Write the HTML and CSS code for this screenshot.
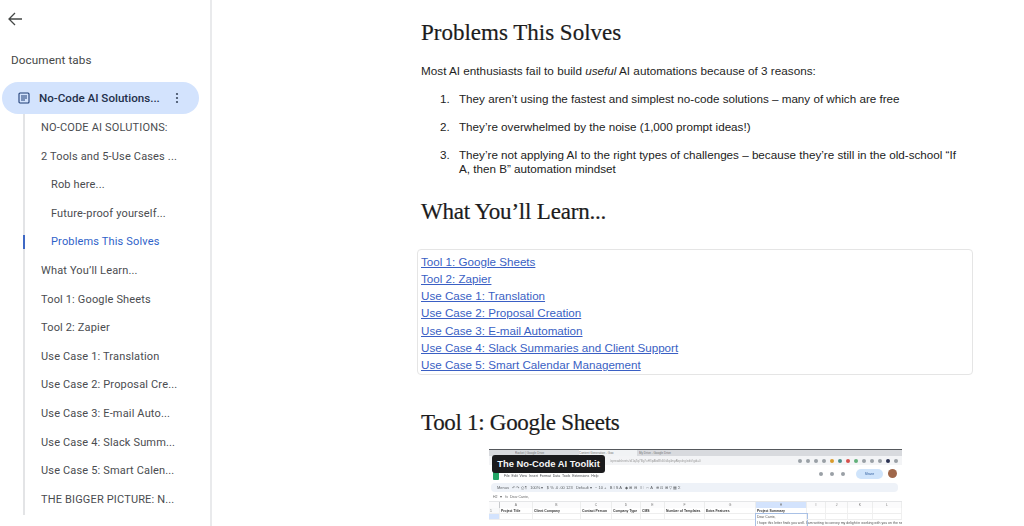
FILE: index.html
```html
<!DOCTYPE html>
<html lang="en">
<head>
<meta charset="utf-8">
<title>No-Code AI Solutions</title>
<link rel="stylesheet" href="styles.css">
</head>
<body>
<div class="app">
  <aside class="sidebar">
    <svg class="back" width="16" height="16" viewBox="0 0 16 16" fill="none" stroke="#444746" stroke-width="1.3"><path d="M15 8H2M8 2 2 8l6 6"/></svg>
    <div class="tabs-title">Document tabs</div>
    <div class="tab">
      <svg class="tab-icon" width="12" height="12" viewBox="0 0 12 12" fill="none" stroke="#1f3f77" stroke-width="1.1"><rect x="1" y="1" width="10" height="10" rx="1"/><path d="M3 4h6M3 6h6M3 8h4"/></svg>
      <span class="tab-name">No-Code AI Solutions...</span>
      <svg class="tab-more" width="4" height="12" viewBox="0 0 4 12" fill="#3c4a60"><circle cx="2" cy="2" r="1.1"/><circle cx="2" cy="6" r="1.1"/><circle cx="2" cy="10" r="1.1"/></svg>
    </div>
    <nav class="outline">
      <a class="item">NO-CODE AI SOLUTIONS:</a>
      <a class="item">2 Tools and 5-Use Cases ...</a>
      <a class="item sub">Rob here...</a>
      <a class="item sub">Future-proof yourself...</a>
      <a class="item sub current">Problems This Solves</a>
      <a class="item">What You’ll Learn...</a>
      <a class="item">Tool 1: Google Sheets</a>
      <a class="item">Tool 2: Zapier</a>
      <a class="item">Use Case 1: Translation</a>
      <a class="item">Use Case 2: Proposal Cre...</a>
      <a class="item">Use Case 3: E-mail Auto...</a>
      <a class="item">Use Case 4: Slack Summ...</a>
      <a class="item">Use Case 5: Smart Calen...</a>
      <a class="item">THE BIGGER PICTURE: N...</a>
    </nav>
  </aside>
  <main class="doc">
    <h2 class="h-first">Problems This Solves</h2>
    <p class="lead">Most AI enthusiasts fail to build <em>useful</em> AI automations because of 3 reasons:</p>
    <ol class="reasons">
      <li>They aren’t using the fastest and simplest no-code solutions – many of which are free</li>
      <li>They’re overwhelmed by the noise (1,000 prompt ideas!)</li>
      <li>They’re not applying AI to the right types of challenges – because they’re still in the old-school “If A, then B” automation mindset</li>
    </ol>
    <h2 class="h-learn">What You’ll Learn...</h2>
    <div class="toc">
      <a href="#">Tool 1: Google Sheets</a>
      <a href="#">Tool 2: Zapier</a>
      <a href="#">Use Case 1: Translation</a>
      <a href="#">Use Case 2: Proposal Creation</a>
      <a href="#">Use Case 3: E-mail Automation</a>
      <a href="#">Use Case 4: Slack Summaries and Client Support</a>
      <a href="#">Use Case 5: Smart Calendar Management</a>
    </div>
    <h2 class="h-tool">Tool 1: Google Sheets</h2>
    <figure class="shot">
      <div class="shot-blur">
        <div class="browser-tabs">
          <span class="btab">Rocket | Google Drive</span>
          <span class="btab active">Content Generation - Goo</span>
          <span class="btab">My Drive - Google Drive</span>
        </div>
        <div class="url-row">
          <span class="url">/spreadsheets/d/1qZq7Bg7uH7qAbd8k6Gt4q4myAbpuhg/edit#gid=0</span>
          <span class="ext-icons">
            <i class="dot grey"></i><i class="dot grey"></i><i class="dot grey"></i><i class="dot grey"></i><i class="dot orange"></i><i class="dot teal"></i><i class="dot red"></i><i class="dot green"></i><i class="dot grey"></i><i class="dot grey"></i><i class="dot grey"></i><i class="dot navy"></i><i class="dot grey"></i>
          </span>
        </div>
        <div class="title-row">
          <span class="sheets-logo"></span>
          <div class="title-text">
            <span class="doc-name">Content Generation Tool</span>
            <span class="menus">File&nbsp; Edit&nbsp; View&nbsp; Insert&nbsp; Format&nbsp; Data&nbsp; Tools&nbsp; Extensions&nbsp; Help</span>
          </div>
          <span class="title-actions">
            <i class="dot grey"></i><i class="dot grey"></i><i class="dot grey"></i>
            <span class="share">Share</span>
            <i class="avatar"></i>
          </span>
        </div>
        <div class="toolbar">Menus&nbsp;&nbsp; ↶ ↷ ⎙ ¶&nbsp;&nbsp; 100% ▾&nbsp;&nbsp; $ % .0 .00 123&nbsp;&nbsp; Default ▾&nbsp;&nbsp; − 10 +&nbsp;&nbsp; B I S A&nbsp;&nbsp; ◆ ⊞ ⊟&nbsp;&nbsp; ≡ ⫶ ⇔ A&nbsp;&nbsp; ⊕ ⊡ ⊞ ▽ ▦ Σ</div>
        <div class="formula">H2 &nbsp;&nbsp;▾ &nbsp;&nbsp;fx &nbsp;Dear Carrie,</div>
        <div class="sheet">
          <span class="col num"></span><span class="col">A</span><span class="col">B</span><span class="col">C</span><span class="col">D</span><span class="col">E</span><span class="col">F</span><span class="col">G</span><span class="col sel">H</span><span class="col">I</span><span class="col">J</span><span class="col">K</span><span class="col">L</span>
          <span class="cell num">1</span><b class="cell">Project Title</b><b class="cell">Client Company</b><b class="cell">Contact Person</b><b class="cell">Company Type</b><b class="cell">CMS</b><b class="cell">Number of Templates</b><b class="cell">Extra Features</b><b class="cell">Project Summary</b><span class="cell"></span><span class="cell"></span><span class="cell"></span><span class="cell"></span>
          <span class="cell num sel"></span><span class="cell"></span><span class="cell"></span><span class="cell"></span><span class="cell"></span><span class="cell"></span><span class="cell"></span><span class="cell"></span><span class="cell active-cell">Dear Carrie,</span><span class="cell"></span><span class="cell"></span><span class="cell"></span><span class="cell"></span>
        </div>
        <div class="letter">I hope this letter finds you well. I am writing to convey my delight in working with you on the ne</div>
      </div>
      <figcaption class="badge">The No-Code AI Toolkit</figcaption>
    </figure>
  </main>
</div>
</body>
</html>
```
FILE: styles.css
```css
* { box-sizing: border-box; }
html, body { margin: 0; height: 526px; overflow: hidden; background: #fff; }
body { font-family: "Liberation Sans", Arial, sans-serif; color: #1f1f1f; }
.app { display: flex; height: 526px; overflow: hidden; }

.sidebar {
  width: 212px;
  flex: none;
  border-right: 2px solid #e9eaec;
  padding: 11px 0 0 0;
  font-family: Roboto, "Liberation Sans", sans-serif;
}
.back { display: block; margin-left: 7px; }
.tabs-title { margin: 26px 0 0 11px; font-size: 11.7px; line-height: 14px; color: #444746; letter-spacing: .1px; }
.tab {
  display: flex;
  align-items: center;
  width: 197px;
  height: 32px;
  margin: 15px 0 0 2px;
  padding-left: 16px;
  background: #d3e3fd;
  border-radius: 16px;
}
.tab-name { margin-left: 9px; width: 128px; font-size: 11.6px; font-weight: 500; color: #1f2f4a; white-space: nowrap; }
.tab-more { margin-left: 8px; }
.outline {
  display: flex;
  flex-direction: column;
  margin: 0 0 0 23px;
  padding-top: 0;
  border-left: 2px solid #e3e4e6;
  width: 170px;
}
.item {
  display: block;
  height: 28.62px;
  line-height: 28px;
  padding-left: 16px;
  font-size: 11px;
  letter-spacing: .16px;
  color: #4a4c4f;
  white-space: nowrap;
}
.item.sub { padding-left: 26px; }
.item.current { color: #2f62c9; position: relative; }
.item.current::before {
  content: "";
  position: absolute;
  left: -2px;
  top: 7px;
  width: 2px;
  height: 14px;
  background: #3f68c4;
}

.doc { flex: 1; min-width: 0; padding: 0 0 0 209px; }
h2 {
  margin: 0;
  font-family: "Liberation Serif", "Times New Roman", serif;
  font-weight: 400;
  font-size: 23px;
  line-height: 28px;
  color: #1c1c1c;
  -webkit-text-stroke: .2px #1c1c1c;
}
.h-first { margin-top: 19px; }
.lead { margin: 17px 0 0; font-size: 11.72px; line-height: 14px; color: #1f1f1f; }
.reasons {
  margin: 14px 0 0;
  padding: 0 0 0 19px;
  width: 547px;
  font-size: 11.66px;
  line-height: 14px;
  color: #222;
  list-style: none;
  counter-reset: reason;
}
.reasons li { display: flex; margin: 0 0 14px; counter-increment: reason; }
.reasons li::before { content: counter(reason) "."; flex: none; width: 19px; }
.h-learn { margin-top: 22px; letter-spacing: -.2px; }
.toc {
  display: flex;
  flex-direction: column;
  align-items: flex-start;
  width: 556px;
  height: 126px;
  margin: 23px 0 0 -4px;
  padding: 3px 0 0 3px;
  border: 1px solid #e5e5e5;
  border-radius: 4px;
}
.toc a { font-size: 11.63px; line-height: 17.15px; color: #3a5fc4; text-decoration: underline; white-space: nowrap; }
.h-tool { margin-top: 34px; letter-spacing: -.3px; }

.shot {
  position: relative;
  width: 413px;
  height: 78px;
  margin: 12px 0 0 68px;
  border-top: 1px solid #55585c;
  overflow: hidden;
  background: #fff;
}
.shot-blur { filter: blur(.45px); font-family: "Liberation Sans", sans-serif; color: #4a4d52; }
.browser-tabs { display: flex; gap: 2px; height: 6px; background: #d8dade; padding-left: 26px; font-size: 3px; line-height: 6px; color: #777; }
.btab { width: 58px; white-space: nowrap; overflow: hidden; }
.btab.active { background: #f1f3f5; margin-left: 4px; }
.url-row { display: flex; justify-content: space-between; align-items: center; height: 9px; padding: 0 4px 0 121px; font-size: 3px; background: #f3f4f6; color: #999; }
.ext-icons { display: flex; gap: 4px; }
.dot { display: block; width: 4px; height: 4px; border-radius: 50%; background: #9aa0a6; }
.orange { background: #d99b2b; }
.teal { background: #4b8f8c; }
.red { background: #d5504c; }
.green { background: #62b07a; }
.navy { background: #2a3152; }
.title-row { display: flex; align-items: center; height: 17px; padding: 0 5px 0 4px; }
.sheets-logo { width: 6px; height: 9px; margin-top: 3px; background: #23a566; border-radius: 1px; }
.title-text { display: flex; flex-direction: column; margin-left: 5px; font-size: 3.5px; line-height: 5.5px; white-space: nowrap; }
.doc-name { color: #666; }
.title-actions { display: flex; align-items: center; gap: 7px; margin-left: auto; }
.share { width: 27px; height: 10px; margin-left: 4px; border-radius: 5px; background: #cfe4fb; font-size: 3.5px; line-height: 10px; text-align: center; color: #2b5a9c; }
.avatar { display: block; width: 9px; height: 9px; margin-left: -2px; border-radius: 50%; background: #a0674a; }
.toolbar { height: 9px; margin: 1px 4px 0 2px; padding-left: 6px; border-radius: 4px; background: #eef2f8; font-size: 4px; line-height: 9px; white-space: nowrap; overflow: hidden; color: #5e6266; }
.formula { height: 10px; padding-left: 4px; margin-top: 0; font-size: 3.5px; line-height: 10px; color: #666; border-bottom: 1px solid #e5e6e8; }
.sheet {
  display: grid;
  grid-template-columns: 11px 33px 48px 31px 29px 24px 40px 51px 51px 19px 22px 25px 29px;
  grid-auto-rows: 6px;
  font-size: 3.4px;
}
.col { line-height: 6px; text-align: center; color: #777; border-right: 1px solid #eceded; background: #fbfbfc; }
.col.num { border-right: 1px solid #c7c9cc; }
.col.sel { background: #d3e3fd; }
.cell { line-height: 6px; padding-left: 1px; white-space: nowrap; border-right: 1px solid #f0f0f0; border-bottom: 1px solid #eee; color: #333; }
b.cell { font-weight: 700; }
.cell.num { color: #777; background: #f8f9fa; }
.cell.num.sel { background: #d3e3fd; }
.active-cell { outline: 1px solid #a9c1e6; height: 14px; color: #555; background: #fff; }
.letter { margin: 0 0 0 268px; font-size: 3.5px; line-height: 6px; white-space: nowrap; color: #555; position: relative; }
.badge {
  position: absolute;
  left: 3px;
  top: 5px;
  width: 113px;
  height: 18px;
  border-radius: 3px;
  background: #1b1b1d;
  color: #f5f5f5;
  font: 700 9.4px/18px "Liberation Sans", sans-serif;
  text-align: center;
  white-space: nowrap;
}
```
